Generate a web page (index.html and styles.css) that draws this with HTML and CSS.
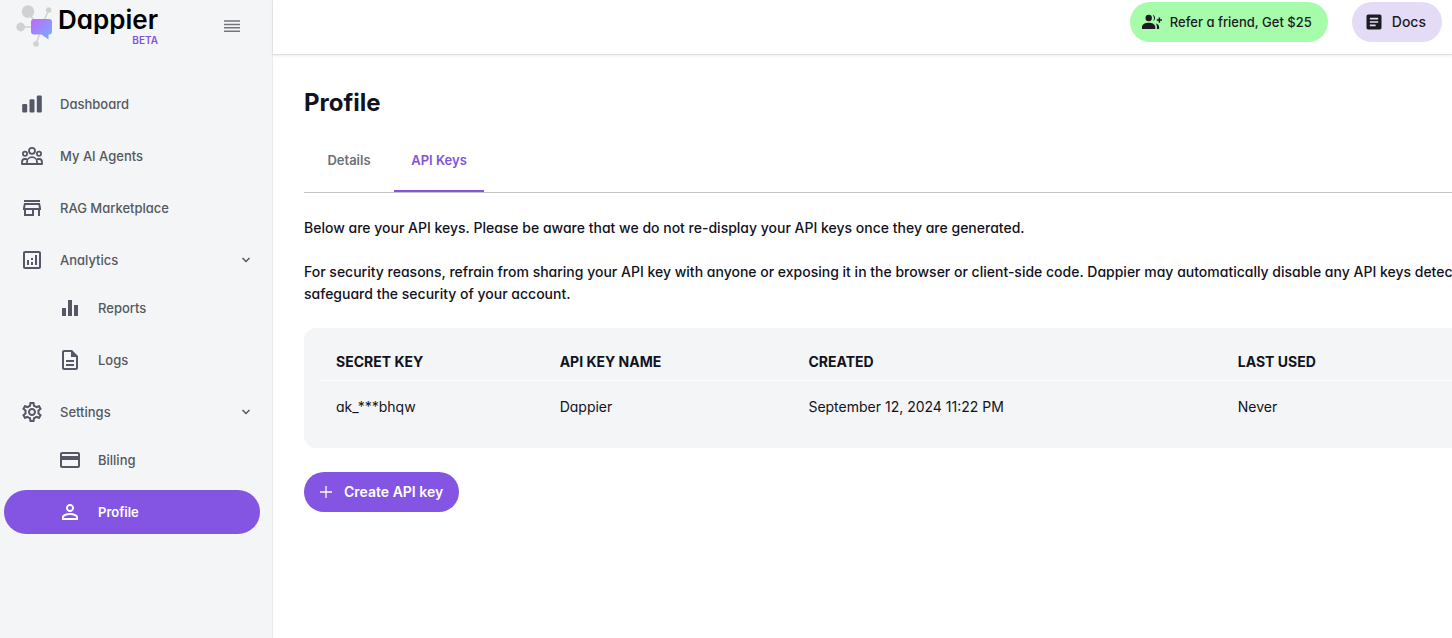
FILE: index.html
```html
<!DOCTYPE html>
<html lang="en">
<head>
<meta charset="utf-8">
<meta name="viewport" content="width=device-width, initial-scale=1">
<title>Dappier – Profile</title>
<link rel="stylesheet" href="styles.css">
</head>
<body>
<div class="app">
  <aside class="sidebar">
    <div class="brand">
      <a class="logo" href="#">
        <svg class="logo-mark" viewBox="0 0 38 44" aria-hidden="true">
          <defs>
            <linearGradient id="bubble" x1="0" y1="0" x2="1" y2="1">
              <stop offset="0" stop-color="#c266fa"/>
              <stop offset="1" stop-color="#6fb4ff"/>
            </linearGradient>
          </defs>
          <g stroke="#d0d2d2" stroke-width="1.4" fill="none">
            <path d="M12 8l10 14M5 23h16M33 6l-8 16M20 40l5-14"/>
          </g>
          <g fill="#d0d2d2">
            <circle cx="12" cy="7.500" r="6.300"/>
            <circle cx="4.700" cy="23" r="4.400"/>
            <circle cx="32.700" cy="6" r="2.700"/>
            <circle cx="20" cy="40" r="2.800"/>
          </g>
          <path fill="url(#bubble)" d="M18 15h15a3 3 0 0 1 3 3v9.500a3 3 0 0 1-3 3h-.5V35.500L25.500 30.500H18a3 3 0 0 1-3-3V18a3 3 0 0 1 3-3z"/>
        </svg>
        <span class="logo-text"><span class="logo-name">Dappier</span><span class="logo-beta">BETA</span></span>
      </a>
      <button class="collapse" type="button" aria-label="Collapse menu">
        <svg viewBox="0 0 16 14" width="16" height="14" stroke="#74777a" stroke-width="1.500"><path d="M0 2h16M0 5.400h16M0 8.800h16M0 12.200h16"/></svg>
      </button>
    </div>

    <nav class="nav">
      <a class="nav-item" href="#">
        <svg class="icon" viewBox="0 0 24 24"><rect x="2.200" y="12" width="5" height="8.500" rx="1.300"/><rect x="9.500" y="7.300" width="5" height="13.200" rx="1.300"/><rect x="16.800" y="3.500" width="5" height="17" rx="1.300"/></svg>
        <span>Dashboard</span>
      </a>
      <a class="nav-item" href="#">
        <svg class="icon line" viewBox="0 0 24 24"><circle cx="12" cy="6.800" r="3"/><circle cx="5" cy="9.800" r="2.100"/><circle cx="19" cy="9.800" r="2.100"/><path d="M7 20v-2.200a5 4.600 0 0 1 10 0V20zM7 20H2v-2a3 3 0 0 1 3-3h1.800M17 20h5v-2a3 3 0 0 0-3-3h-1.800"/></svg>
        <span>My AI Agents</span>
      </a>
      <a class="nav-item" href="#">
        <svg class="icon" viewBox="0 0 24 24"><path d="M18.360 9l.6 3H5.040l.6-3h12.720M20 4H4v2h16V4zm0 3H4l-1 5v2h1v6h10v-6h4v6h2v-6h1v-2l-1-5zM6 18v-4h6v4H6z"/></svg>
        <span>RAG Marketplace</span>
      </a>
      <a class="nav-item" href="#">
        <svg class="icon" viewBox="0 0 24 24"><path d="M19 3H5c-1.100 0-2 .9-2 2v14c0 1.100.9 2 2 2h14c1.100 0 2-.9 2-2V5c0-1.100-.9-2-2-2zm0 16H5V5h14v14zM7 12h2v5H7zM15 7h2v10h-2zM11 14h2v3h-2zM11 10h2v2h-2z"/></svg>
        <span>Analytics</span>
        <svg class="chevron" viewBox="0 0 16 16"><path d="M4.500 6l3.500 3.500L11.500 6"/></svg>
      </a>
      <div class="subnav">
        <a class="nav-item" href="#">
          <svg class="icon" viewBox="0 0 24 24"><path d="M4 12h4v8H4zM10 4h4v16h-4zM16 9h4v11h-4z"/></svg>
          <span>Reports</span>
        </a>
        <a class="nav-item" href="#">
          <svg class="icon" viewBox="0 0 24 24"><path d="M8 16h8v2H8zm0-4h8v2H8zm6-10H6c-1.100 0-2 .9-2 2v16c0 1.100.89 2 1.990 2H18c1.100 0 2-.9 2-2V8l-6-6zm4 18H6V4h7v5h5v11z"/></svg>
          <span>Logs</span>
        </a>
      </div>
      <a class="nav-item" href="#">
        <svg class="icon" viewBox="0 0 24 24"><path d="M19.430 12.980c.04-.32.07-.64.07-.98 0-.34-.03-.66-.07-.98l2.110-1.650c.19-.15.24-.42.12-.64l-2-3.460c-.09-.16-.26-.25-.44-.25-.06 0-.12.010-.17.030l-2.490 1c-.52-.4-1.080-.73-1.690-.98l-.38-2.650C14.460 2.180 14.250 2 14 2h-4c-.25 0-.46.18-.49.42l-.38 2.650c-.61.25-1.170.59-1.690.98l-2.490-1c-.06-.02-.12-.03-.18-.03-.17 0-.34.09-.43.25l-2 3.460c-.13.22-.07.49.12.64l2.110 1.650c-.04.32-.07.65-.07.98 0 .33.03.66.07.98l-2.110 1.650c-.19.15-.24.42-.12.64l2 3.460c.09.16.26.25.44.25.06 0 .12-.01.17-.03l2.490-1c.52.4 1.080.73 1.690.98l.38 2.650c.03.24.24.42.49.42h4c.25 0 .46-.18.49-.42l.38-2.650c.61-.25 1.170-.59 1.690-.98l2.490 1c.06.02.12.03.18.03.17 0 .34-.09.43-.25l2-3.460c.12-.22.07-.49-.12-.64l-2.110-1.650zm-1.980-1.710c.04.31.05.52.05.73 0 .21-.02.43-.05.73l-.14 1.130.89.7 1.080.84-.7 1.210-1.270-.51-1.040-.42-.9.68c-.43.32-.84.56-1.250.73l-1.060.43-.16 1.130-.2 1.350h-1.400l-.19-1.350-.16-1.130-1.060-.43c-.43-.18-.83-.41-1.230-.71l-.91-.7-1.060.43-1.270.51-.7-1.210 1.080-.84.89-.7-.14-1.130c-.03-.31-.05-.54-.05-.74s.02-.43.05-.73l.14-1.130-.89-.7-1.080-.84.7-1.210 1.270.51 1.040.42.9-.68c.43-.32.84-.56 1.250-.73l1.060-.43.16-1.130.2-1.350h1.390l.19 1.350.16 1.130 1.060.43c.43.18.83.41 1.230.71l.91.7 1.060-.43 1.270-.51.7 1.210-1.070.85-.89.7.14 1.130zM12 8c-2.210 0-4 1.790-4 4s1.790 4 4 4 4-1.790 4-4-1.790-4-4-4zm0 6c-1.100 0-2-.9-2-2s.9-2 2-2 2 .9 2 2-.9 2-2 2z"/></svg>
        <span>Settings</span>
        <svg class="chevron" viewBox="0 0 16 16"><path d="M4.500 6l3.500 3.500L11.500 6"/></svg>
      </a>
      <div class="subnav">
        <a class="nav-item" href="#">
          <svg class="icon" viewBox="0 0 24 24"><path d="M20 4H4c-1.110 0-1.990.89-1.990 2L2 18c0 1.110.89 2 2 2h16c1.110 0 2-.89 2-2V6c0-1.110-.89-2-2-2zm0 14H4v-6h16v6zm0-10H4V6h16v2z"/></svg>
          <span>Billing</span>
        </a>
        <a class="nav-item active" href="#" aria-current="page">
          <svg class="icon" viewBox="0 0 24 24"><path d="M12 5.900a2.100 2.100 0 1 1 0 4.200 2.100 2.100 0 0 1 0-4.200m0 9c2.970 0 6.100 1.460 6.100 2.100v1.100H5.900V17c0-.64 3.130-2.100 6.100-2.100M12 4C9.790 4 8 5.790 8 8s1.790 4 4 4 4-1.790 4-4-1.790-4-4-4zm0 9c-2.670 0-8 1.340-8 4v3h16v-3c0-2.660-5.330-4-8-4z"/></svg>
          <span>Profile</span>
        </a>
      </div>
    </nav>
  </aside>

  <div class="page">
    <header class="topbar">
      <a class="pill refer" href="#">
        <svg viewBox="0 0 20 20" width="20" height="20"><circle cx="6.700" cy="6" r="3.200"/><path d="M0 17v-2c0-2.700 3.400-4.200 6.700-4.200s6.600 1.500 6.600 4.200v2zM10.800 3c2.600.4 3.400 4.400.4 6.200 1.200-2 1-4.300-.4-6.200zM13.600 11.300c2.200.7 3.500 2 3.500 3.700v2h-2.200v-2c0-1.500-.4-2.700-1.300-3.700zM16.600 5.400h1.500v1.900H20v1.500h-1.900v1.900h-1.500V8.800h-1.900V7.300h1.900z"/></svg>
        <span>Refer a friend, Get $25</span>
      </a>
      <a class="pill docs" href="#">
        <svg viewBox="0 0 24 24" width="20" height="20"><path d="M19 3H5c-1.100 0-2 .9-2 2v14c0 1.100.9 2 2 2h14c1.100 0 2-.9 2-2V5c0-1.100-.9-2-2-2zm-5 14H7v-2h7v2zm3-4H7v-2h10v2zm0-4H7V7h10v2z"/></svg>
        <span>Docs</span>
      </a>
    </header>

    <main class="main">
      <div class="content">
        <h1>Profile</h1>
        <div class="tabs" role="tablist">
          <button class="tab" type="button" role="tab" aria-selected="false">Details</button>
          <button class="tab selected" type="button" role="tab" aria-selected="true">API Keys</button>
        </div>
        <div class="notes">
          <p>Below are your API keys. Please be aware that we do not re-display your API keys once they are generated.</p>
          <p>For security reasons, refrain from sharing your API key with anyone or exposing it in the browser or client-side code. Dappier may automatically disable any API keys detected to safeguard the security of your account.</p>
        </div>
        <div class="card">
          <table>
            <thead>
              <tr><th class="col-key" scope="col">SECRET KEY</th><th class="col-name" scope="col">API KEY NAME</th><th class="col-created" scope="col">CREATED</th><th scope="col">LAST USED</th></tr>
            </thead>
            <tbody>
              <tr><td>ak_***bhqw</td><td>Dappier</td><td>September 12, 2024 11:22 PM</td><td>Never</td></tr>
            </tbody>
          </table>
        </div>
        <button class="create" type="button">
          <svg viewBox="0 0 12 12" width="12" height="12" stroke="#fff" stroke-width="1.300"><path d="M6 0v12M0 6h12"/></svg>
          <span>Create API key</span>
        </button>
      </div>
    </main>
  </div>
</div>
</body>
</html>
```

FILE: styles.css
```css
* {
  box-sizing: border-box;
}

body {
  margin: 0;
  background: #fff;
  color: #111322;
  font-family: Inter, "Liberation Sans", sans-serif;
  font-size: 14px;
  line-height: 22px;
  font-feature-settings: "cv11";
}

a {
  color: inherit;
  text-decoration: none;
}

button {
  border: 0;
  padding: 0;
  background: none;
  color: inherit;
  font: inherit;
  cursor: pointer;
}

svg {
  flex: none;
}

.app {
  display: flex;
  min-height: 100vh;
}

/* Sidebar */
.sidebar {
  flex: none;
  width: 273px;
  padding: 4px 12px 24px 4px;
  background: #f3f5f7;
  border-right: 1px solid #e9eaec;
}

.brand {
  display: flex;
  justify-content: space-between;
  align-items: flex-start;
  padding: 0 20px 0 12px;
  height: 78px;
}

.logo {
  display: flex;
  gap: 4px;
}

.logo-mark {
  width: 38px;
  height: 44px;
}

.logo-text {
  display: flex;
  flex-direction: column;
  align-items: flex-end;
}

.logo-name {
  color: #000;
  font-size: 26px;
  font-weight: 600;
  line-height: 32px;
}

.logo-beta {
  color: #8154e0;
  font-size: 10px;
  font-weight: 600;
  line-height: 8px;
}

.collapse {
  display: flex;
  padding: 15px 0;
}

.nav,
.subnav {
  display: flex;
  flex-direction: column;
  gap: 8px;
}

.subnav {
  margin-top: -4px;
}

.nav-item {
  display: flex;
  align-items: center;
  gap: 16px;
  height: 44px;
  padding: 0 6px 0 16px;
  border-radius: 22px;
  color: #555960;
  font-size: 13px;
  font-weight: 500;
}

.subnav .nav-item {
  padding-left: 54px;
}

.nav-item.active {
  background: #8355e2;
  color: #fff;
  font-weight: 600;
}

.icon {
  width: 24px;
  height: 24px;
  fill: #555766;
}

.icon.line {
  fill: none;
  stroke: #555766;
  stroke-width: 1.800;
  stroke-linejoin: round;
}

.active .icon {
  fill: #fff;
}

.chevron {
  width: 16px;
  height: 16px;
  margin-left: auto;
  fill: none;
  stroke: #555960;
  stroke-width: 1.500;
}

/* Page */
.page {
  flex: 1;
  min-width: 0;
}

.topbar {
  display: flex;
  justify-content: flex-end;
  gap: 24px;
  padding: 2px 10px 12px;
  border-bottom: 1px solid #dfdfe1;
  box-shadow: 0 1px 3px rgba(0, 0, 0, 0.08);
}

.pill {
  display: flex;
  align-items: center;
  gap: 8px;
  height: 40px;
  padding: 0 16px 0 12px;
  border-radius: 20px;
  color: #1c1b20;
  font-weight: 500;
}

.refer {
  background: #a7fcab;
  font-size: 13px;
}

.docs {
  background: #e4dcf7;
}

.pill svg {
  fill: #1c1b20;
}

.main {
  padding: 32px 0 32px 31px;
  overflow: hidden;
}

.content {
  width: calc(100% + 80px);
}

h1 {
  margin: 0;
  font-size: 24px;
  font-weight: 700;
  line-height: 32px;
}

.tabs {
  display: flex;
  margin-top: 9px;
  border-bottom: 1px solid #c3c3c7;
}

.tab {
  min-width: 90px;
  padding: 21px 16px 19px;
  border-bottom: 2px solid transparent;
  color: #6d7078;
  font-size: 13px;
  font-weight: 600;
  line-height: 22px;
  font-feature-settings: normal;
}

.tab.selected {
  border-color: #8355e2;
  color: #8154d8;
}

.notes {
  display: flex;
  flex-direction: column;
  gap: 22px;
  padding: 24px 0 23px;
  font-weight: 500;
}

.notes p {
  margin: 0;
}

.card {
  padding: 16px;
  border-radius: 12px;
  background: #f3f5f7;
}

table {
  width: 100%;
  table-layout: fixed;
  border-collapse: separate;
  border-spacing: 0;
}

th,
td {
  padding: 0 16px;
  text-align: left;
  line-height: 20px;
}

th {
  height: 37px;
  border-bottom: 1px solid #fff;
  font-weight: 700;
}

td {
  height: 51px;
}

.col-key {
  width: 18.700%;
}

.col-name {
  width: 20.800%;
}

.col-created {
  width: 35.900%;
}

.create {
  display: flex;
  align-items: center;
  gap: 12px;
  height: 40px;
  margin-top: 24px;
  padding: 0 16px;
  border-radius: 20px;
  background: #8355e2;
  color: #fff;
  font-weight: 600;
  font-feature-settings: normal;
}
```
